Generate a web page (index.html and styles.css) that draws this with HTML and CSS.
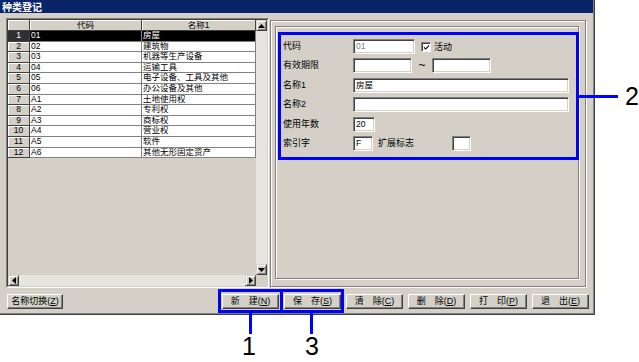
FILE: index.html
```html
<!DOCTYPE html>
<html lang="zh">
<head>
<meta charset="utf-8">
<title>种类登记</title>
<link rel="stylesheet" href="styles.css">
</head>
<body>
<div class="stage">
  <div class="window">
    <div class="titlebar">种类登记</div>
    <div class="client">
      <div class="main">
        <div class="gridbox">
          <div class="gridin">
            <div class="table">
              <div class="row head"><div class="c num"></div><div class="c">代码</div><div class="c">名称1</div></div>
              <div class="row sel"><div class="c num">1</div><div class="c">01</div><div class="c">房屋</div></div>
              <div class="row"><div class="c num">2</div><div class="c">02</div><div class="c">建筑物</div></div>
              <div class="row"><div class="c num">3</div><div class="c">03</div><div class="c">机器等生产设备</div></div>
              <div class="row"><div class="c num">4</div><div class="c">04</div><div class="c">运输工具</div></div>
              <div class="row"><div class="c num">5</div><div class="c">05</div><div class="c">电子设备、工具及其他</div></div>
              <div class="row"><div class="c num">6</div><div class="c">06</div><div class="c">办公设备及其他</div></div>
              <div class="row"><div class="c num">7</div><div class="c">A1</div><div class="c">土地使用权</div></div>
              <div class="row"><div class="c num">8</div><div class="c">A2</div><div class="c">专利权</div></div>
              <div class="row"><div class="c num">9</div><div class="c">A3</div><div class="c">商标权</div></div>
              <div class="row"><div class="c num">10</div><div class="c">A4</div><div class="c">营业权</div></div>
              <div class="row"><div class="c num">11</div><div class="c">A5</div><div class="c">软件</div></div>
              <div class="row"><div class="c num">12</div><div class="c">A6</div><div class="c">其他无形固定资产</div></div>
            </div>
            <div class="vscroll">
              <div class="sbtn"><svg width="7" height="4" viewBox="0 0 7 4"><path d="M3.5 0 L7 4 L0 4 Z" fill="#000"/></svg></div>
              <div class="track"></div>
              <div class="sbtn"><svg width="7" height="4" viewBox="0 0 7 4"><path d="M0 0 L7 0 L3.5 4 Z" fill="#000"/></svg></div>
            </div>
            <div class="hscroll">
              <div class="sbtn"><svg width="4" height="7" viewBox="0 0 4 7"><path d="M4 0 L4 7 L0 3.5 Z" fill="#000"/></svg></div>
              <div class="track"></div>
              <div class="sbtn"><svg width="4" height="7" viewBox="0 0 4 7"><path d="M0 0 L4 3.5 L0 7 Z" fill="#000"/></svg></div>
            </div>
            <div class="corner"></div>
          </div>
        </div>
        <div class="rightbox">
          <div class="inner">
            <div class="form">
              <div class="frow"><span class="lbl">代码</span><span class="inp w-code dis">01</span><span class="chk"><svg width="8" height="8" viewBox="0 0 8 8"><path d="M1 3.5 L3 5.5 L7 1.5 L7 3 L3 7 L1 5 Z" fill="#000"/></svg></span><span class="chk-lbl">活动</span></div>
              <div class="frow"><span class="lbl">有效期限</span><span class="inp w-date"></span><span class="tilde">~</span><span class="inp w-date"></span></div>
              <div class="frow"><span class="lbl">名称1</span><span class="inp w-name">房屋</span></div>
              <div class="frow"><span class="lbl">名称2</span><span class="inp w-name"></span></div>
              <div class="frow"><span class="lbl">使用年数</span><span class="inp w-year">20</span></div>
              <div class="frow"><span class="lbl">索引字</span><span class="inp w-idx">F</span><span class="lbl2">扩展标志</span><span class="inp w-ext"></span></div>
            </div>
          </div>
        </div>
      </div>
      <div class="buttons">
        <div class="btn btn-first">名称切换(<u>Z</u>)</div>
        <div class="btn-group">
          <div class="btn">新　建(<u>N</u>)</div>
          <div class="btn">保　存(<u>S</u>)</div>
          <div class="btn">清　除(<u>C</u>)</div>
          <div class="btn">删　除(<u>D</u>)</div>
          <div class="btn">打　印(<u>P</u>)</div>
          <div class="btn">退　出(<u>E</u>)</div>
        </div>
      </div>
    </div>
  </div>

  <div class="hl hl-new"></div>
  <div class="hl hl-save"></div>
  <div class="hl hl-form"></div>
  <div class="lead lead-1"></div>
  <div class="lead lead-3"></div>
  <div class="lead lead-2"></div>
  <div class="callout callout-1">1</div>
  <div class="callout callout-3">3</div>
  <div class="callout callout-2">2</div>
</div>
</body>
</html>
```

FILE: styles.css
```css
* { box-sizing: border-box; margin: 0; padding: 0; }
body {
  background: #fff;
  font-family: "Liberation Sans", "Noto Sans CJK SC", sans-serif;
  font-size: 9px;
  color: #000;
}
.stage { position: relative; width: 639px; height: 362px; overflow: hidden; }

.window {
  width: 595px;
  height: 315px;
  background: #d4d0c8;
  border-right: 1px solid #404040;
  border-bottom: 1px solid #404040;
  box-shadow: inset -1px -1px 0 #808080;
  display: flex;
  flex-direction: column;
}
.titlebar {
  width: 593px;
  height: 13px;
  background: #0a246a;
  color: #fff;
  font-family: "Noto Sans CJK SC", sans-serif;
  font-weight: bold;
  font-size: 10px;
  line-height: 13px;
  padding-left: 2px;
}
.client { padding: 5px 0 0 6px; }
.main { display: flex; height: 270px; }

/* left grid */
.gridbox {
  width: 263px;
  height: 270px;
  border: 1px solid;
  border-color: #808080 #fff #fff #808080;
}
.gridin {
  width: 100%;
  height: 100%;
  border: 1px solid;
  border-color: #404040 #d4d0c8 #d4d0c8 #404040;
  display: grid;
  grid-template-columns: 248px 11px;
  grid-template-rows: 255px 11px;
}
.table { background: #d4d0c8; overflow: hidden; }
.row {
  display: grid;
  grid-template-columns: 22px 112px 114px;
  height: 10.6px;
}
.row.head { height: 11px; }
.c {
  background: #fff;
  border-right: 1px solid #808080;
  border-bottom: 1px solid #808080;
  font-size: 8.5px;
  line-height: 9.6px;
  padding-left: 1px;
  white-space: nowrap;
  overflow: hidden;
}
.num, .head .c {
  background: #d4d0c8;
  border-right-color: #404040;
  border-bottom-color: #404040;
  box-shadow: inset 1px 1px 0 #fff;
  text-align: center;
  padding-left: 0;
}
.head .c { line-height: 10px; }
.sel .c { background: #000; color: #fff; }
.sel .num { background: #303030; box-shadow: none; color: #fff; }

.vscroll { display: flex; flex-direction: column; background: #e6e4de; }
.hscroll { display: flex; background: #e6e4de; }
.track { flex: 1; }
.corner { background: #d4d0c8; }
.sbtn {
  width: 11px;
  height: 11px;
  flex: none;
  background: #d4d0c8;
  border: 1px solid;
  border-color: #d4d0c8 #404040 #404040 #d4d0c8;
  box-shadow: inset 1px 1px 0 #fff, inset -1px -1px 0 #808080;
  display: flex;
  align-items: center;
  justify-content: center;
}

/* right panel */
.rightbox {
  margin-left: 1px;
  margin-top: 2px;
  width: 316px;
  height: 267px;
  border: 1px solid #808080;
  box-shadow: inset 1px 1px 0 #fff, 1px 1px 0 #fff;
  padding: 5px 0 0 4px;
}
.inner {
  width: 304px;
  height: 253px;
  border: 1px solid #808080;
  box-shadow: inset 1px 1px 0 #fff, 1px 1px 0 #fff;
  padding: 12px 0 0 7px;
}
.form { display: flex; flex-direction: column; gap: 4.4px; }
.frow { display: flex; align-items: center; height: 15px; }
.lbl { width: 70px; font-size: 9px; line-height: 15px; }
.lbl2 { width: 74px; margin-left: 5px; font-size: 9px; line-height: 15px; }
.inp {
  height: 15px;
  background: #fff;
  border: 1px solid;
  border-color: #808080 #fff #fff #808080;
  box-shadow: inset 1px 1px 0 #404040, inset -1px -1px 0 #d4d0c8;
  font-size: 8.5px;
  line-height: 12px;
  padding-left: 2px;
  white-space: nowrap;
}
.dis { color: #808080; }
.w-code { width: 62px; }
.w-date { width: 59px; }
.w-name { width: 216px; }
.w-year { width: 22px; }
.w-idx { width: 20px; }
.w-ext { width: 19px; }
.chk {
  width: 10px;
  height: 10px;
  margin-left: 6px;
  background: #fff;
  border: 1px solid;
  border-color: #808080 #fff #fff #808080;
  box-shadow: inset 1px 1px 0 #404040;
  display: flex;
  align-items: center;
  justify-content: center;
}
.chk svg { margin: 1px 0 0 1px; }
.chk-lbl { margin-left: 3px; font-size: 9px; }
.tilde { width: 20px; text-align: center; font-size: 12px; line-height: 15px; }

/* buttons */
.buttons { display: flex; margin-top: 6px; padding-left: 1px; padding-right: 5px; }
.btn-group { margin-left: auto; display: flex; gap: 5px; }
.btn {
  width: 57px;
  height: 15px;
  background: #d4d0c8;
  border: 1px solid;
  border-color: #fff #404040 #404040 #fff;
  box-shadow: inset -1px -1px 0 #808080;
  font-size: 9px;
  line-height: 13px;
  text-align: center;
  white-space: nowrap;
}
.btn-first { width: 56px; }
.btn u { text-decoration: underline; }

/* annotations */
.hl { position: absolute; border: 3px solid #0000ff; }
.hl-new { left: 218px; top: 289px; width: 65px; height: 24px; }
.hl-save { left: 280px; top: 289px; width: 64px; height: 24px; }
.hl-form { left: 278px; top: 32px; width: 301px; height: 128px; }
.lead { position: absolute; background: #0000ff; }
.lead-1 { left: 249px; top: 313px; width: 3px; height: 21px; }
.lead-3 { left: 310px; top: 313px; width: 3px; height: 21px; }
.lead-2 { left: 579px; top: 95px; width: 39px; height: 3px; }
.callout {
  position: absolute;
  font-family: "Liberation Sans", sans-serif;
  font-size: 25px;
  line-height: 25px;
  color: #000;
}
.callout-1 { left: 242px; top: 334px; }
.callout-3 { left: 305px; top: 334px; }
.callout-2 { left: 625px; top: 84px; }
```
